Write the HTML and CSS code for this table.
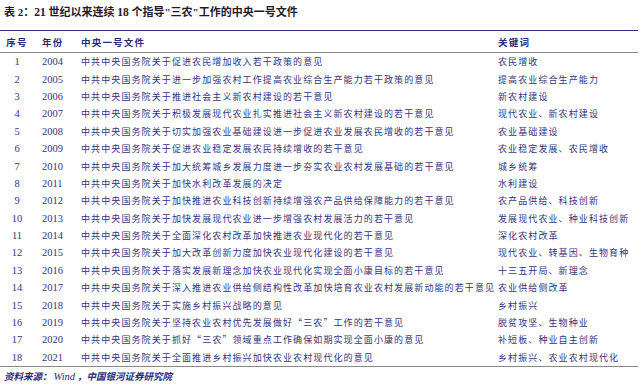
FILE: index.html
```html
<!DOCTYPE html>
<html lang="zh">
<head>
    <meta charset="UTF-8">
    <title>21世纪以来连续18个指导"三农"工作的中央一号文件</title>
    <link rel="stylesheet" href="styles.css">
</head>
<body>
    <h1 class="title">表 2：<span class="num">21</span> 世纪以来连续 <span class="num">18</span> 个指导"三农"工作的中央一号文件</h1>

    <table class="docs">
        <colgroup>
            <col class="c-no">
            <col class="c-year">
            <col class="c-doc">
            <col class="c-key">
        </colgroup>
        <thead>
            <tr>
                <th class="no">序号</th>
                <th>年份</th>
                <th>中央一号文件</th>
                <th class="key">关键词</th>
            </tr>
        </thead>
        <tbody>
            <tr><td class="no">1</td><td class="year">2004</td><td>中共中央国务院关于促进农民增加收入若干政策的意见</td><td class="key">农民增收</td></tr>
            <tr><td class="no">2</td><td class="year">2005</td><td>中共中央国务院关于进一步加强农村工作提高农业综合生产能力若干政策的意见</td><td class="key">提高农业综合生产能力</td></tr>
            <tr><td class="no">3</td><td class="year">2006</td><td>中共中央国务院关于推进社会主义新农村建设的若干意见</td><td class="key">新农村建设</td></tr>
            <tr><td class="no">4</td><td class="year">2007</td><td>中共中央国务院关于积极发展现代农业扎实推进社会主义新农村建设的若干意见</td><td class="key">现代农业、新农村建设</td></tr>
            <tr><td class="no">5</td><td class="year">2008</td><td>中共中央国务院关于切实加强农业基础建设进一步促进农业发展农民增收的若干意见</td><td class="key">农业基础建设</td></tr>
            <tr><td class="no">6</td><td class="year">2009</td><td>中共中央国务院关于促进农业稳定发展农民持续增收的若干意见</td><td class="key">农业稳定发展、农民增收</td></tr>
            <tr><td class="no">7</td><td class="year">2010</td><td>中共中央国务院关于加大统筹城乡发展力度进一步夯实农业农村发展基础的若干意见</td><td class="key">城乡统筹</td></tr>
            <tr><td class="no">8</td><td class="year">2011</td><td>中共中央国务院关于加快水利改革发展的决定</td><td class="key">水利建设</td></tr>
            <tr><td class="no">9</td><td class="year">2012</td><td>中共中央国务院关于加快推进农业科技创新持续增强农产品供给保障能力的若干意见</td><td class="key">农产品供给、科技创新</td></tr>
            <tr><td class="no">10</td><td class="year">2013</td><td>中共中央国务院关于加快发展现代农业进一步增强农村发展活力的若干意见</td><td class="key">发展现代农业、种业科技创新</td></tr>
            <tr><td class="no">11</td><td class="year">2014</td><td>中共中央国务院关于全面深化农村改革加快推进农业现代化的若干意见</td><td class="key">深化农村改革</td></tr>
            <tr><td class="no">12</td><td class="year">2015</td><td>中共中央国务院关于加大改革创新力度加快农业现代化建设的若干意见</td><td class="key">现代农业、转基因、生物育种</td></tr>
            <tr><td class="no">13</td><td class="year">2016</td><td>中共中央国务院关于落实发展新理念加快农业现代化实现全面小康目标的若干意见</td><td class="key">十三五开局、新理念</td></tr>
            <tr><td class="no">14</td><td class="year">2017</td><td>中共中央国务院关于深入推进农业供给侧结构性改革加快培育农业农村发展新动能的若干意见</td><td class="key">农业供给侧改革</td></tr>
            <tr><td class="no">15</td><td class="year">2018</td><td>中共中央国务院关于实施乡村振兴战略的意见</td><td class="key">乡村振兴</td></tr>
            <tr><td class="no">16</td><td class="year">2019</td><td>中共中央国务院关于坚持农业农村优先发展做好“三农”工作的若干意见</td><td class="key">脱贫攻坚、生物种业</td></tr>
            <tr><td class="no">17</td><td class="year">2020</td><td>中共中央国务院关于抓好“三农”领域重点工作确保如期实现全面小康的意见</td><td class="key">补短板、种业自主创新</td></tr>
            <tr><td class="no">18</td><td class="year">2021</td><td>中共中央国务院关于全面推进乡村振兴加快农业农村现代化的意见</td><td class="key">乡村振兴、农业农村现代化</td></tr>
        </tbody>
    </table>

    <p class="source">资料来源：<span class="latin">Wind</span>，中国银河证券研究院</p>
</body>
</html>
```

FILE: styles.css
```css
body {
    margin: 0;
    background-color: #fff;
    font-family: "Liberation Serif", "Noto Sans CJK SC", serif;
    color: #34347f;
}
.title {
    margin: 0 0 6px 4px;
    font-family: "Liberation Serif", "Noto Sans CJK SC", serif;
    font-size: 11px;
    font-weight: bold;
    line-height: 24px;
    color: #1c1c2e;
}
.title .num {
    font-size: 11.5px;
}
.docs {
    width: 638px;
    border-collapse: collapse;
    table-layout: fixed;
    border-top: 1.5px solid #2e2e86;
    border-bottom: 1.5px solid #8a8a8a;
}
.c-no {
    width: 34px;
}
.c-year {
    width: 44px;
}
.c-doc {
    width: 414px;
}
.c-key {
    width: 146px;
}
.docs th {
    height: 21px;
    padding: 0 0 0 8px;
    text-align: left;
    font-family: "Noto Sans CJK SC", sans-serif;
    font-size: 9.5px;
    font-weight: bold;
    letter-spacing: 1.2px;
    color: #2a2a78;
    border-bottom: 1.5px solid #8a8a8a;
}
.docs th:nth-child(3) {
    padding-left: 3px;
}
.docs td {
    height: 17.4px;
    padding: 0 0 0 3px;
    white-space: nowrap;
    font-family: "Noto Sans CJK SC", sans-serif;
    font-size: 9px;
    letter-spacing: 1.1px;
    vertical-align: middle;
}
.docs .no {
    padding: 0;
    text-align: center;
}
.docs td.no,
.docs td.year {
    font-family: "Liberation Serif", serif;
    font-size: 10.5px;
    letter-spacing: 0;
}
.docs td.year {
    padding-left: 8px;
}
.docs .key {
    padding-left: 6px;
}
.source {
    margin: 0 0 0 4px;
    line-height: 19px;
    font-family: "Noto Sans CJK SC", sans-serif;
    font-size: 9.5px;
    font-style: italic;
    font-weight: bold;
    color: #2c2c80;
}
.source .latin {
    font-family: "Liberation Serif", serif;
    font-weight: normal;
    font-size: 10.5px;
    padding: 0 2px;
}
```
